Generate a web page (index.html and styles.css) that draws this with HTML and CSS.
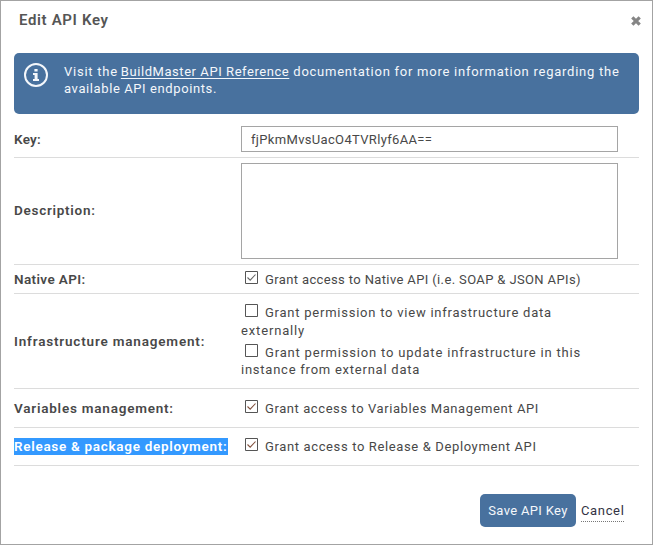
FILE: index.html
```html
<!DOCTYPE html>
<html lang="en">
<head>
<meta charset="utf-8">
<title>Edit API Key</title>
<link rel="stylesheet" href="styles.css">
</head>
<body>
<main class="dialog">
  <header class="head">
    <h1 class="title">Edit API Key</h1>
    <svg class="close" width="10" height="10" viewBox="0 0 10 10"><path d="M1.3 1.3 8.7 8.7M8.7 1.3 1.3 8.7" stroke="#858585" stroke-width="3.2"/></svg>
  </header>
  <section class="banner">
    <svg class="info" width="26" height="26" viewBox="0 0 26 26"><circle cx="13" cy="13" r="11" fill="none" stroke="#f4f7fb" stroke-width="2"/><path d="M11.4 7h3.2v2.6h-3.2zM10 11h4.6v6H16v2h-6v-2h1.6v-4H10z" fill="#f4f7fb"/></svg>
    <p class="banner-text"><span class="b1">Visit the <a class="ref">BuildMaster API Reference</a> documentation for more information regarding the</span><br><span class="b2">available API endpoints.</span></p>
  </section>
  <div class="row row-key"><label class="label l-key">Key:</label><div class="field"><div class="input"><span class="key">fjPkmMvsUacO4TVRlyf6AA==</span></div></div></div>
  <div class="row row-desc"><label class="label l-desc">Description:</label><div class="field"><div class="input area"></div></div></div>
  <div class="row row-native"><label class="label l-native">Native API:</label><div class="field">
    <div class="option"><svg class="box" viewBox="0 0 13 13"><path class="frame" d="M.5.5h12v12H.5z"/><path class="tick" d="m2.5 6.5 2.7 2.7 5.3-5.7"/></svg><span class="t-native">Grant access to Native API (i.e. SOAP &amp; JSON APIs)</span></div>
  </div></div>
  <div class="row row-infra"><label class="label l-infra">Infrastructure management:</label><div class="field">
    <div class="option"><svg class="box" viewBox="0 0 13 13"><path class="frame" d="M.5.5h12v12H.5z"/></svg><span class="t-view">Grant permission to view infrastructure data</span></div>
    <div class="wrap first"><span class="t-ext">externally</span></div>
    <div class="option"><svg class="box" viewBox="0 0 13 13"><path class="frame" d="M.5.5h12v12H.5z"/></svg><span class="t-update">Grant permission to update infrastructure in this</span></div>
    <div class="wrap"><span class="t-inst">instance from external data</span></div>
  </div></div>
  <div class="row row-vars"><label class="label l-vars">Variables management:</label><div class="field">
    <div class="option"><svg class="box" viewBox="0 0 13 13"><path class="frame" d="M.5.5h12v12H.5z"/><path class="tick warm" d="m2.5 6.5 2.7 2.7 5.3-5.7"/></svg><span class="t-vars">Grant access to Variables Management API</span></div>
  </div></div>
  <div class="row row-release"><label class="label l-release"><span class="selected">Release &amp; package deployment:</span></label><div class="field">
    <div class="option"><svg class="box" viewBox="0 0 13 13"><path class="frame" d="M.5.5h12v12H.5z"/><path class="tick warm" d="m2.5 6.5 2.7 2.7 5.3-5.7"/></svg><span class="t-release">Grant access to Release &amp; Deployment API</span></div>
  </div></div>
  <footer class="actions"><button class="save">Save API Key</button><a class="cancel">Cancel</a></footer>
</main>
</body>
</html>
```
FILE: styles.css
```css
* { box-sizing: border-box; }
body { margin: 0; background: #fff; }
.dialog {
  width: 653px; height: 545px; padding: 0 13px;
  border: 1px solid #a3a3a3; overflow: hidden;
  font: 13px/18px Roboto, "Liberation Sans", sans-serif;
  letter-spacing: .5px; color: #484848; white-space: nowrap;
}
.head { height: 52px; padding: 10px 0 0 5px; display: flex; justify-content: space-between; }
.title { margin: 0; font-size: 15px; line-height: 18px; font-weight: 600; letter-spacing: .65px; color: #555; }
.close { margin: 5px -1.5px 0 0; }
.banner { width: 625px; height: 61px; background: #48719e; border-radius: 5px; color: #f4f7fb; display: flex; padding: 9px 9px 0; }
.info { flex: none; }
.banner-text { margin: 1px 0 0 15px; line-height: 17px; }
.b1 { letter-spacing: .75px; }
.b2 { letter-spacing: .6px; }
.ref { margin-left: -1px; letter-spacing: .56px; text-decoration: underline; text-underline-offset: 2px; }
.row { width: 625px; display: flex; align-items: center; border-bottom: 1px solid #dcdcdc; }
.label { width: 227px; font-size: 13.5px; font-weight: 600; }
.l-key { letter-spacing: .25px; }
.l-desc { letter-spacing: .72px; padding-bottom: 2px; }
.l-native { letter-spacing: .38px; padding-bottom: 1px; }
.l-infra { letter-spacing: .82px; padding-bottom: 1px; }
.l-vars { letter-spacing: .78px; padding-bottom: 1px; }
.l-release { letter-spacing: .7px; height: 18px; }
.field { width: 377px; }
.row-key { height: 44px; padding-top: 7px; }
.row-desc { height: 107px; }
.row-native { height: 29px; }
.row-infra { height: 95px; }
.row-vars { height: 39px; }
.row-release { height: 38px; }
.input { height: 26px; border: 1px solid #a5a5a5; padding: 4px 9px; line-height: 18px; letter-spacing: .33px; }
.area { height: 96px; }
.option { display: flex; align-items: center; height: 18px; padding-left: 4px; }
.t-native { letter-spacing: .37px; padding-top: 1px; }
.t-view { letter-spacing: .76px; }
.t-ext { letter-spacing: .85px; }
.t-update { letter-spacing: .81px; }
.t-inst { letter-spacing: .76px; }
.t-vars { letter-spacing: .58px; padding-top: 1px; }
.t-release { letter-spacing: .63px; }
.box { width: 13px; height: 13px; margin: -4px 7px 0 0; flex: none; }
.frame { fill: #fff; stroke: #555; }
.tick { fill: none; stroke: #666; stroke-width: 1.1; }
.warm { stroke: #80503c; }
.wrap { height: 17px; line-height: 16px; }
.first { height: 22px; line-height: 18px; }
.selected { background: #3399ff; color: #fff; display: block; width: 214px; height: 17px; line-height: 17px; }
.actions { display: flex; justify-content: flex-end; padding: 28px 15px 0 0; gap: 5px; color: #333; }
.save { width: 96px; height: 33px; padding: 0; border: 0; border-radius: 5px; background: #48719e; color: #f4f7fb; font: inherit; letter-spacing: .33px; }
.cancel { width: 43px; height: 28px; line-height: 33px; letter-spacing: .65px; border-bottom: 1px dotted #777; color: #333344; }
```
